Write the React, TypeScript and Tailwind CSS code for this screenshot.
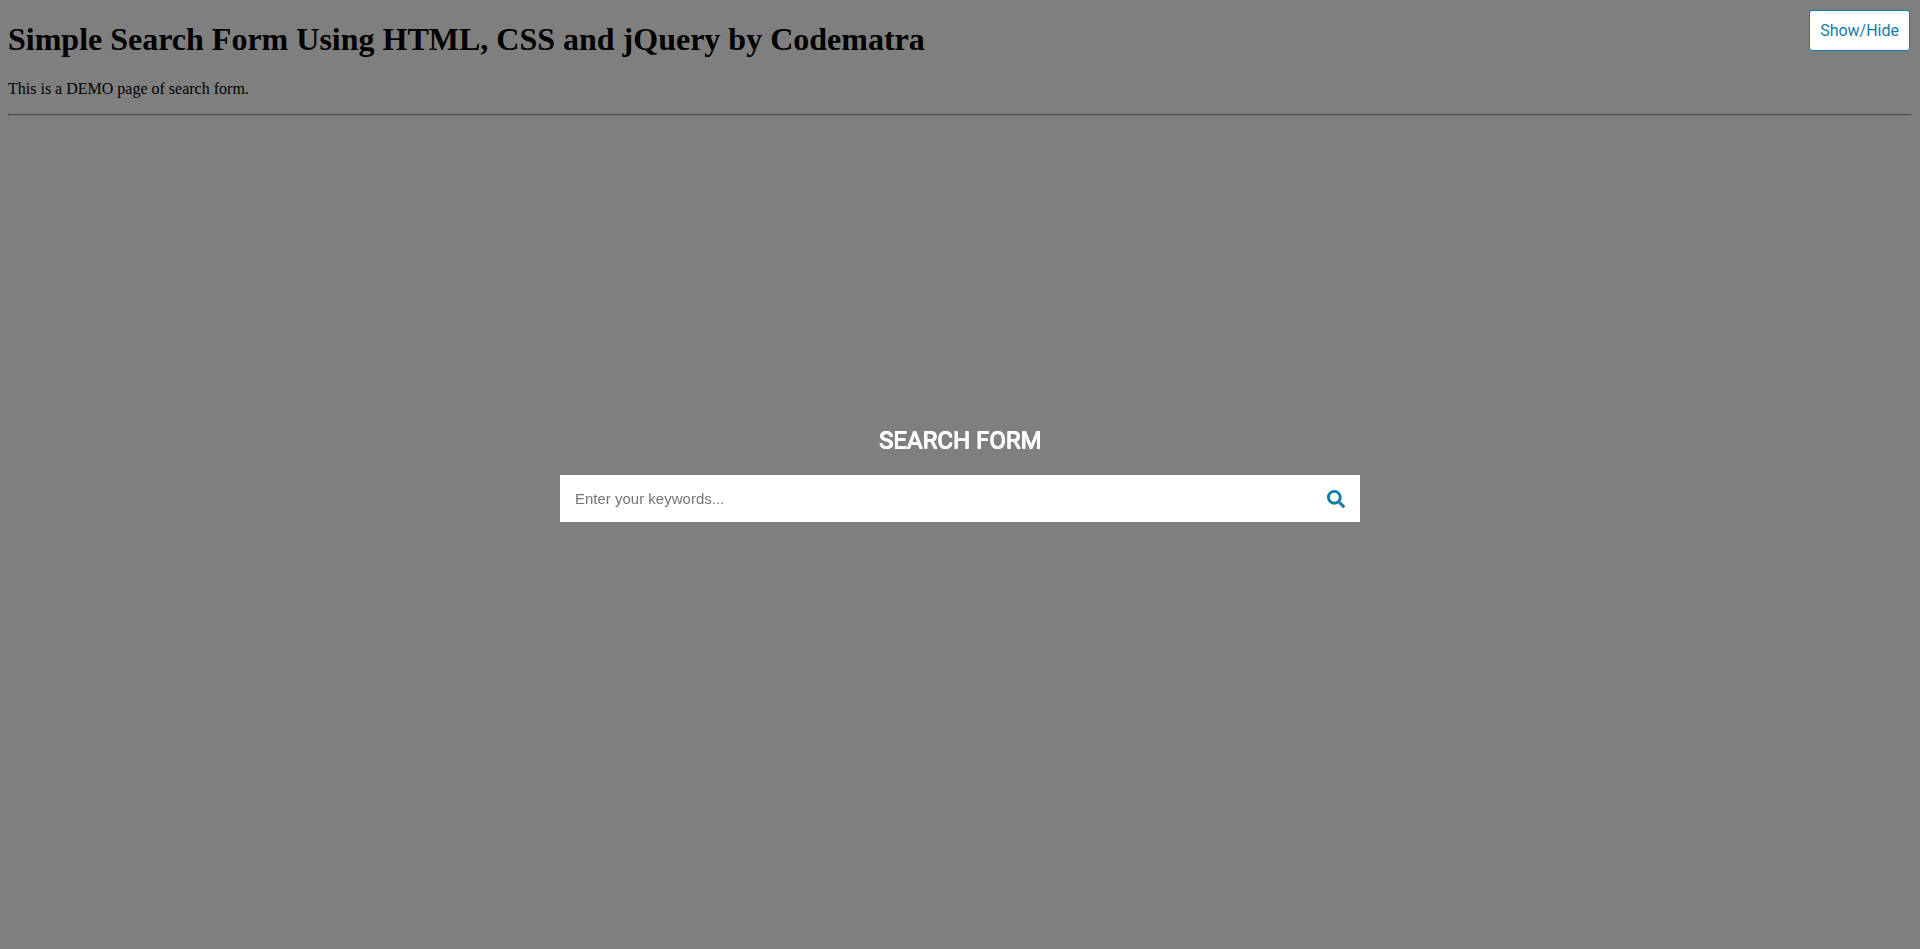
import { useState } from "react";
import { FaSearch } from "react-icons/fa";

function SearchOverlay() {
  return (
    <div className="fixed inset-0 bg-black/50">
      <form
        className="mx-auto flex w-[800px] flex-col pt-[427px]"
        onSubmit={(e) => e.preventDefault()}
      >
        <h2 className="mb-5 text-center font-['Roboto',sans-serif] text-[24px]/[28px] font-normal text-white [text-shadow:0.75px_0_0_white,0.75px_-0.75px_0_white,0_-0.75px_0_white]">
          SEARCH FORM
        </h2>
        <div className="flex h-[47px] items-center bg-white">
          <input
            type="text"
            placeholder="Enter your keywords..."
            className="h-full min-w-0 grow px-[15px] font-['Liberation_Sans',Arial,sans-serif] text-[15px]/[17px] outline-none placeholder:text-[#757575]"
          />
          <button type="submit" aria-label="Search" className="px-[15px] text-[#117ca7]">
            <FaSearch size={18} />
          </button>
        </div>
      </form>
    </div>
  );
}

export default function App() {
  const [open, setOpen] = useState(true);
  return (
    <div className="min-h-screen bg-white px-2 pt-[21px] font-['Liberation_Serif','Times_New_Roman',serif] text-base text-black">
      <h1 className="text-[32px]/[37px] font-bold">
        Simple Search Form Using HTML, CSS and jQuery by Codematra
      </h1>
      <p className="mt-[22px] text-[16px]/[18px]">This is a DEMO page of search form.</p>
      <hr className="mt-4 h-0.5 border border-t-[#9a9a9a] border-r-[#eeeeee] border-b-[#eeeeee] border-l-[#9a9a9a]" />
      {open && <SearchOverlay />}
      <button
        type="button"
        onClick={() => setOpen(!open)}
        className="fixed top-[10px] right-[10px] rounded-[3px] border border-[#117ca7] bg-white p-[10px] font-['Roboto',sans-serif] text-[16px]/[19px] text-[#117ca7]"
      >
        Show/Hide
      </button>
    </div>
  );
}
